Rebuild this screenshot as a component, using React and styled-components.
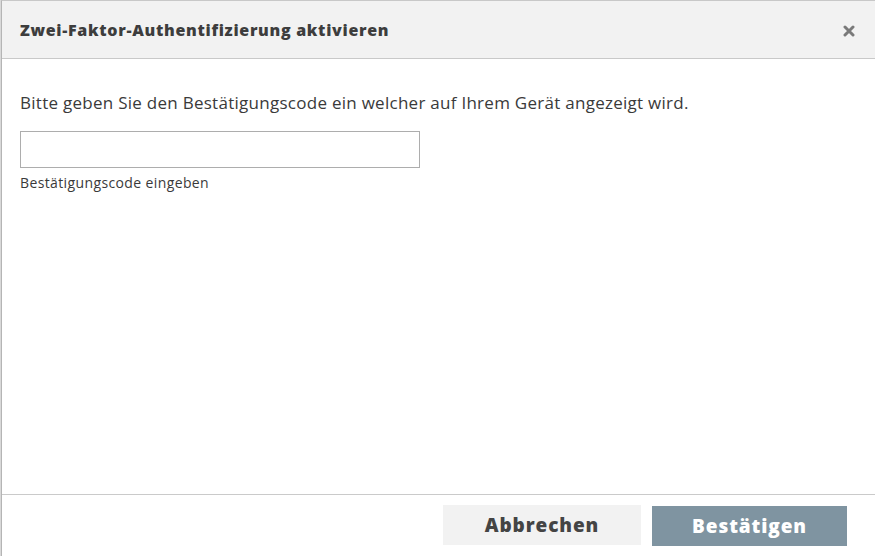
import React from "react";
import styled, { createGlobalStyle } from "styled-components";

const GlobalStyle = createGlobalStyle`
  html, body {
    margin: 0;
    padding: 0;
    background: #d9d9d9;
  }
  * {
    box-sizing: border-box;
  }
`;

const Page = styled.div`
  display: flex;
  width: 875px;
  height: 556px;
  overflow: hidden;
  padding-left: 1px;
`;

const Modal = styled.div`
  flex: 1;
  display: flex;
  flex-direction: column;
  background: #ffffff;
  border-left: 1px solid #b5b5b5;
  border-top: 1px solid #c8c8c8;
  min-height: 600px;
`;

const Header = styled.div`
  display: flex;
  align-items: center;
  justify-content: space-between;
  height: 58px;
  padding: 0 19px 0 18px;
  background: #f2f2f2;
  border-bottom: 1px solid #c9c9c9;
`;

const Title = styled.h4`
  margin: 0;
  font-family: "Open Sans", "Liberation Sans", sans-serif;
  font-weight: 800;
  font-size: 16px;
  letter-spacing: 0.7px;
  color: #3d3d3d;
`;

const CloseButton = styled.button`
  border: 0;
  background: none;
  padding: 0;
  width: 14px;
  height: 14px;
  display: flex;
  align-items: center;
  justify-content: center;
  cursor: pointer;
  margin-top: 2px;
`;

const Body = styled.div`
  height: 435px;
  padding: 33px 18px 0 18px;
  display: flex;
  flex-direction: column;
`;

const Intro = styled.p`
  margin: 0 0 17px 0;
  font-family: "Open Sans", "Liberation Sans", sans-serif;
  font-size: 17px;
  line-height: 22px;
  letter-spacing: 0.27px;
  color: #3a3a3a;
`;

const CodeInput = styled.input`
  width: 400px;
  height: 37px;
  border: 1px solid #adadad;
  border-radius: 0;
  padding: 0 10px;
  font-size: 15px;
  outline: none;
`;

const Hint = styled.span`
  margin-top: 5px;
  font-family: "Open Sans", "Liberation Sans", sans-serif;
  font-size: 14px;
  letter-spacing: 0.38px;
  color: #3a3a3a;
`;

const Footer = styled.div`
  border-top: 1px solid #cacaca;
  display: flex;
  justify-content: flex-end;
  gap: 11px;
  padding: 10px 28px 0 0;
`;

const Button = styled.button`
  width: ${(p) => (p.$primary ? "195px" : "198px")};
  height: 40px;
  border: 0;
  border-radius: 0;
  background: ${(p) => (p.$primary ? "#7f94a1" : "#f2f2f2")};
  color: ${(p) => (p.$primary ? "#ffffff" : "#444444")};
  font-family: "Open Sans", "Liberation Sans", sans-serif;
  font-weight: 800;
  font-size: 19px;
  letter-spacing: 0.9px;
  margin-top: ${(p) => (p.$primary ? "1px" : "0")};
  cursor: pointer;
`;

const CloseIcon = () => (
  <svg width="12" height="12" viewBox="0 0 12 12">
    <path
      d="M2 2 L10 10 M10 2 L2 10"
      stroke="#7a7a7a"
      strokeWidth="3"
      strokeLinecap="round"
    />
  </svg>
);

export default function App() {
  return (
    <>
      <GlobalStyle />
      <Page>
        <Modal>
          <Header>
            <Title>Zwei-Faktor-Authentifizierung aktivieren</Title>
            <CloseButton aria-label="Schließen">
              <CloseIcon />
            </CloseButton>
          </Header>
          <Body>
            <Intro>
              Bitte geben Sie den Bestätigungscode ein welcher auf Ihrem Gerät
              angezeigt wird.
            </Intro>
            <CodeInput type="text" />
            <Hint>Bestätigungscode eingeben</Hint>
          </Body>
          <Footer>
            <Button>Abbrechen</Button>
            <Button $primary>Bestätigen</Button>
          </Footer>
        </Modal>
      </Page>
    </>
  );
}
